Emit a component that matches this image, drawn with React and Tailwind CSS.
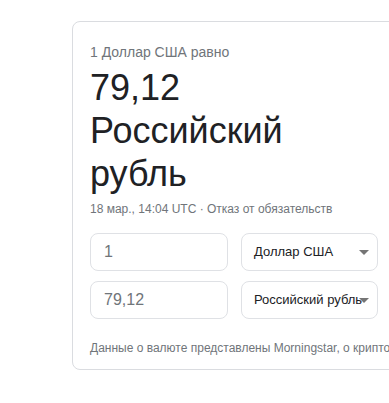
import React from "react";

const Arrow = () => (
  <svg width="10" height="5" viewBox="0 0 10 5" className="absolute right-[8px] top-[16px]">
    <path d="M0 0 L10 0 L5 5 Z" fill="#757575" />
  </svg>
);

const CurrencySelect = ({ label }) => (
  <div className="relative h-[38px] w-[137px] rounded-[8px] border border-[#dfe1e5] bg-white">
    <div className="h-full overflow-hidden whitespace-nowrap pl-[12px] pr-[16px] text-[13px] leading-[36px] text-[#202124]">
      {label}
    </div>
    <Arrow />
  </div>
);

const AmountInput = ({ value }) => (
  <div className="h-[38px] w-[138px] rounded-[8px] border border-[#dfe1e5] bg-white pl-[13px] text-[16px] leading-[36px] text-[#70757a]">
    {value}
  </div>
);

export default function App() {
  return (
    <div className="min-h-[403px] w-[389px] overflow-hidden bg-white font-['Liberation_Sans',Arial,sans-serif]">
      <div className="ml-[72px] mt-[21px] w-[340px] rounded-[8px] border border-[#dadce0] pl-[17px] pt-[20px] pb-[13px]">
        <div className="text-[14px] leading-[20px] text-[#70757a]">1 Доллар США равно</div>
        <div className="mt-[4px] w-[230px] text-[36px] leading-[43px] text-[#202124]">
          79,12 Российский рубль
        </div>
        <div className="mt-[6px] text-[12px] leading-[16px] text-[#70757a]">
          18 мар., 14:04 UTC · <span>Отказ от обязательств</span>
        </div>
        <div className="mt-[16px] flex flex-col gap-[10px]">
          <div className="flex gap-[13px]">
            <AmountInput value="1" />
            <CurrencySelect label="Доллар США" />
          </div>
          <div className="flex gap-[13px]">
            <AmountInput value="79,12" />
            <CurrencySelect label="Российский рубль" />
          </div>
        </div>
        <div className="mt-[21px] whitespace-nowrap text-[12px] leading-[16px] text-[#70757a]">
          Данные о валюте представлены Morningstar, о криптовалюте – Coinbase
        </div>
      </div>
    </div>
  );
}
